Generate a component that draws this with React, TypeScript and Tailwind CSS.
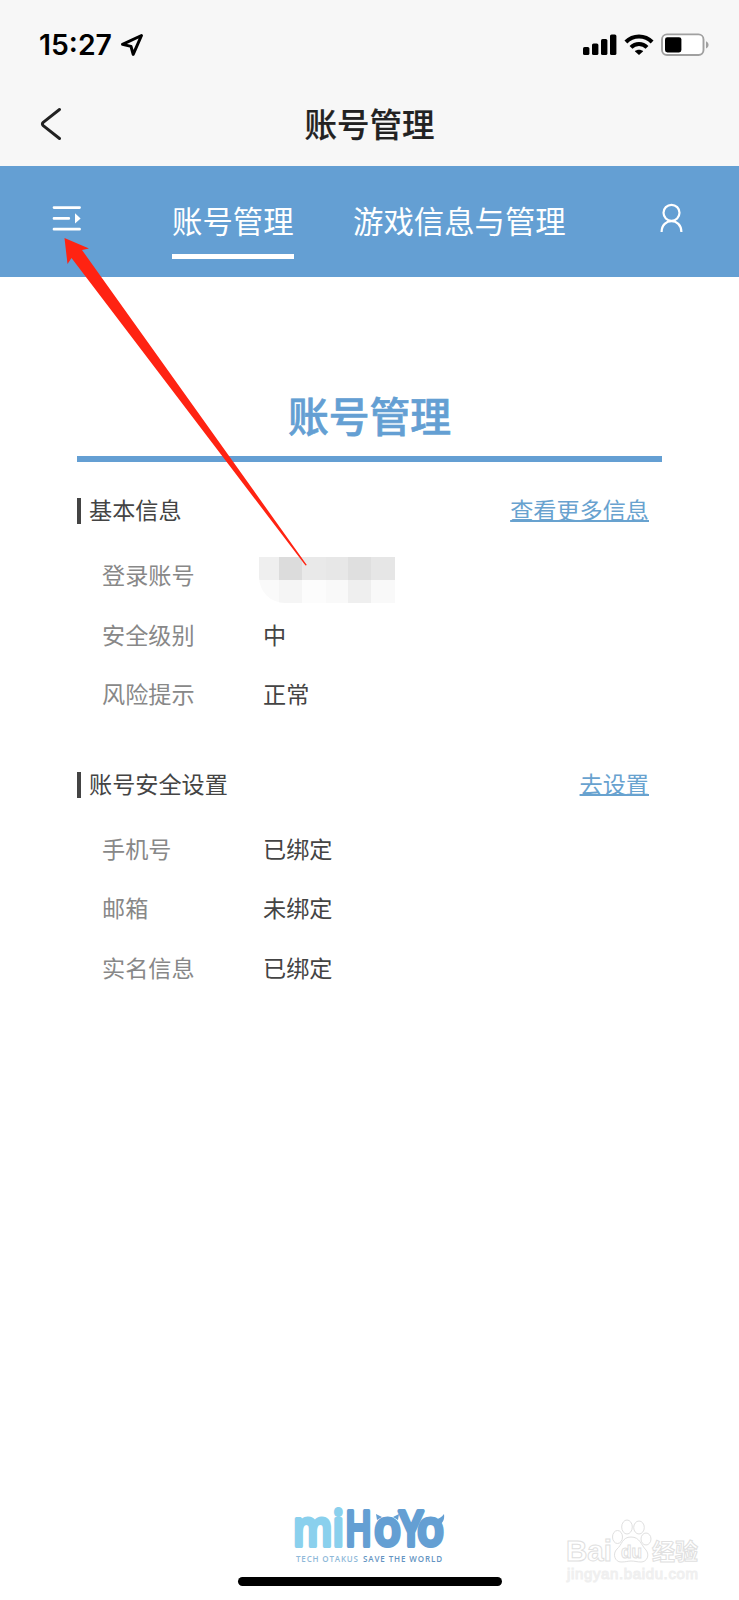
import React from 'react';

interface Row {
  label: string;
  value?: string;
}

interface SectionProps {
  title: string;
  action: string;
  rows: Row[];
}

const basicRows: Row[] = [
  { label: '登录账号' },
  { label: '安全级别', value: '中' },
  { label: '风险提示', value: '正常' },
];

const securityRows: Row[] = [
  { label: '手机号', value: '已绑定' },
  { label: '邮箱', value: '未绑定' },
  { label: '实名信息', value: '已绑定' },
];

const StatusBar: React.FC = () => (
  <div className="flex h-[88px] items-center justify-between pl-[39px] pr-[28px] pt-px">
    <div className="flex items-center">
      <span className="font-['Inter'] text-[28.4px] font-semibold leading-[34px] text-black">15:27</span>
      <svg className="ml-[8px]" width="24" height="24" viewBox="0 0 24 24" fill="none" stroke="#000" strokeWidth="3" strokeLinejoin="round">
        <path d="M21.5 2.5 L2.5 11.4 L11 13.4 L13.2 21.4 Z" />
      </svg>
    </div>
    <div className="flex items-center">
      <svg width="34" height="22" viewBox="0 0 34 22">
        <rect x="0" y="13" width="6.4" height="8" rx="1.6" />
        <rect x="9" y="9.5" width="6.4" height="11.5" rx="1.6" />
        <rect x="18" y="5" width="6.4" height="16" rx="1.6" />
        <rect x="27" y="0.5" width="6.4" height="20.5" rx="1.6" />
      </svg>
      <svg className="ml-[7px]" width="30" height="22" viewBox="0 0 30 22" fill="none" stroke="#000" strokeWidth="4">
        <path d="M1.9 8 C9 0.6 21 0.6 28.1 8" />
        <path d="M7 13.4 C11.4 9 18.6 9 23 13.4" />
        <path d="M15 21 L10.8 17.2 C13 15.2 17 15.2 19.2 17.2 Z" fill="#000" stroke="none" />
      </svg>
      <svg className="ml-[7px] mr-px" width="49" height="24" viewBox="0 0 49 24">
        <rect x="1" y="1.4" width="41.5" height="20.6" rx="5" fill="#fff" stroke="#a0a0a0" strokeWidth="1.9" />
        <rect x="4" y="4.2" width="16.4" height="15.2" rx="2.4" />
        <path d="M45 8.2 C48.4 9.6 48.4 14 45 15.4 Z" fill="#a0a0a0" />
      </svg>
    </div>
  </div>
);

const TitleBar: React.FC = () => (
  <div className="grid h-[78px] grid-cols-[1fr_auto_1fr] items-center px-[40px] pb-[6px]">
    <svg width="24" height="36" viewBox="0 0 24 36" fill="none" stroke="#222" strokeWidth="2.9" strokeLinecap="round" strokeLinejoin="round">
      <path d="M19.5 3.5 L3.2 16.4 Q1.6 18 3.2 19.6 L19.5 32.5" />
    </svg>
    <h1 className="pb-[3px] text-[32.5px] font-medium leading-[40px] text-[#222] [-webkit-text-stroke:0.2px_#222]">账号管理</h1>
  </div>
);

const NavBar: React.FC = () => (
  <nav className="flex h-[111px] items-start bg-[#649fd3] pl-[52px] text-[30.4px] leading-[42px] text-white">
    <svg className="mt-[38px]" width="30" height="28" viewBox="0 0 30 28" fill="none" stroke="#fff" strokeWidth="2.7" strokeLinecap="round">
      <path d="M2 3.6 H27.6 M2 14.4 H16.8 M2 25.2 H27.6" />
      <path d="M23 9.2 L28.6 14.4 L23 19.6 Z" fill="#fff" stroke="none" />
    </svg>
    <div className="ml-[90px] mt-[33px] h-[60px] w-[122px] whitespace-nowrap border-b-5 border-white">账号管理</div>
    <div className="ml-[59px] mt-[33px] whitespace-nowrap">游戏信息与管理</div>
    <svg className="ml-auto mr-[56px] mt-[37px]" width="23" height="30" viewBox="0 0 23 30" fill="none" stroke="#fff" strokeWidth="2.2">
      <circle cx="11.5" cy="9.8" r="8" />
      <path d="M1.6 29 C1.6 14.6 21.4 14.6 21.4 29" />
    </svg>
  </nav>
);

// pixelated account name
const MaskedAccount: React.FC = () => (
  <div className="-ml-[4px] mt-[12px] grid h-[46px] w-[136px] grid-cols-[20px_23px_24px_22px_23px_24px] grid-rows-2 overflow-hidden rounded-bl-[26px]">
    <div className="bg-[#efefef]" />
    <div className="bg-[#dcdcdc]" />
    <div className="bg-[#e9e9e9]" />
    <div className="bg-[#e7e7e7]" />
    <div className="bg-[#dfdfdf]" />
    <div className="bg-[#e6e6e6]" />
    <div className="bg-[#fafafa]" />
    <div className="bg-[#f5f5f5]" />
    <div className="bg-[#fcfcfc]" />
    <div className="bg-[#f9f9f9]" />
    <div className="bg-[#efefef]" />
    <div className="bg-[#f9f9f9]" />
  </div>
);

const Section: React.FC<SectionProps> = ({ title, action, rows }) => (
  <section className="text-[23.15px]">
    <div className="flex h-[34px] items-center pr-[13px]">
      <span className="h-[26px] w-[4px] bg-[#444]" />
      <h3 className="ml-[8px] pb-[3px] leading-[31px] text-[#444]">{title}</h3>
      <a className="ml-auto pb-[3px] leading-[31px] text-[#68a2cf] underline decoration-[1.5px] underline-offset-[1px]">{action}</a>
    </div>
    <div className="mt-[18px] pl-[25px]">
      {rows.map((row) => (
        <div key={row.label} className="flex h-[59.6px] items-center pb-[3px]">
          <span className="w-[161px] text-[#888]">{row.label}</span>
          {row.value ? <span className="text-[#444]">{row.value}</span> : <MaskedAccount />}
        </div>
      ))}
    </div>
  </section>
);

const Logo: React.FC = () => (
  <svg width="160" height="84" viewBox="0 -20 160 84" className="font-['Open_Sans']">
    <g fontSize="49" fontWeight="600" strokeLinejoin="round" strokeWidth="4">
      <text x="3" y="40" textLength="51" lengthAdjust="spacingAndGlyphs" fill="#8ad0ed" stroke="#8ad0ed">mi</text>
      <g fill="#649fd3" stroke="#649fd3">
        <text x="55" y="40" textLength="27" lengthAdjust="spacingAndGlyphs">H</text>
        <text x="84" y="40" textLength="27" lengthAdjust="spacingAndGlyphs">o</text>
        <text x="109" y="40" textLength="24" lengthAdjust="spacingAndGlyphs">Y</text>
        <text x="127" y="40" textLength="27" lengthAdjust="spacingAndGlyphs">o</text>
      </g>
    </g>
    <path d="M86 8 L92 11 L87 14 Z M109 8 L103 11 L108 14 Z" fill="#649fd3" />
    <path d="M142 13 C148 14 151 12 154 8 C155 14 152 18 148 20 Z" fill="#649fd3" />
    <g fontSize="8" fontWeight="600">
      <text x="6" y="56" textLength="62" fill="#8fb9d9">TECH OTAKUS</text>
      <text x="73" y="56" textLength="79" fill="#6394c2">SAVE THE WORLD</text>
    </g>
  </svg>
);

const Watermark: React.FC = () => (
  <svg className="absolute left-[560px] top-[1510px]" width="150" height="80" viewBox="0 0 150 80" fill="#fff" stroke="#e0e0e0" strokeWidth="1">
    <text x="6" y="51" fontFamily="Liberation Sans" fontSize="30" fontWeight="700" textLength="46" lengthAdjust="spacingAndGlyphs">Bai</text>
    <ellipse cx="57.5" cy="27" rx="5" ry="6.5" />
    <ellipse cx="67" cy="17" rx="5.3" ry="7" />
    <ellipse cx="79" cy="17.5" rx="5.3" ry="6.5" />
    <ellipse cx="86" cy="29" rx="5" ry="6" />
    <path d="M71 27 C62 27 62 35 57 39 C52 44 55 52 61 52 C66 52 68 51 71 51 C75 51 77 52 81 52 C87 52 90 45 86 40 C81 35 80 27 71 27 Z" />
    <text x="61" y="48" fontFamily="Liberation Sans" fontSize="19" fontWeight="700" textLength="21" lengthAdjust="spacingAndGlyphs">du</text>
    <text x="92" y="50" fontFamily="Noto Sans CJK SC" fontSize="23" fontWeight="700" textLength="46">经验</text>
    <text x="7" y="69" fontFamily="Liberation Sans" fontSize="15" textLength="131" fill="#f8f8f8" stroke="#efefef">jingyan.baidu.com</text>
  </svg>
);

const App: React.FC = () => {
  return (
    <div className="relative flex h-[1600px] w-[739px] flex-col overflow-hidden bg-white font-['Noto_Sans_CJK_SC',sans-serif]">
      <header className="bg-[#f7f7f7]">
        <StatusBar />
        <TitleBar />
      </header>
      <NavBar />

      <main className="mx-[77px] flex-1">
        <h2 className="mt-[112px] h-[73px] border-b-6 border-[#649fd3] text-center text-[40.8px] font-medium leading-[52px] text-[#649fd3] [-webkit-text-stroke:0.7px_#649fd3]">账号管理</h2>
        <div className="mt-[32px] flex flex-col gap-[43px]">
          <Section title="基本信息" action="查看更多信息" rows={basicRows} />
          <Section title="账号安全设置" action="去设置" rows={securityRows} />
        </div>
      </main>

      <footer className="flex flex-col items-center">
        <Logo />
        <div className="mb-[14px] mt-[7px] h-[9px] w-[264px] rounded-full bg-black" />
      </footer>

      <Watermark />

      {/* red pointer to the menu button */}
      <svg className="pointer-events-none absolute left-0 top-0" width="320" height="580" viewBox="0 0 320 580" fill="#ff2312">
        <path d="M64.5 238 L89 248.5 L82 250 L306.8 565 L305.5 565.5 L71.5 258 L67.5 264 Z" />
      </svg>
    </div>
  );
};

export default App;
